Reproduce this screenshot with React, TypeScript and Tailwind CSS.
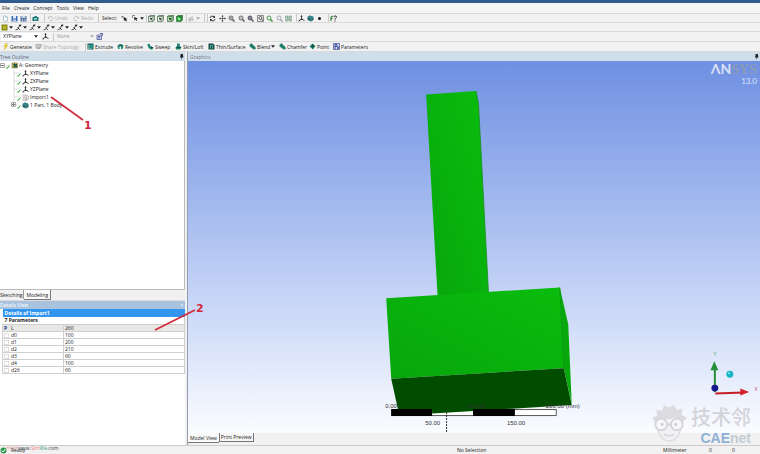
import React from "react";

type IconProps = { name: string };

function Icon({ name }: IconProps) {
  const s = { fill: "none", stroke: "#333", strokeWidth: 1.4 };
  let art: React.ReactNode = null;
  switch (name) {
    case "new":
      art = <><path d="M3 2h5l3 3v7H3z" fill="#fff" stroke="#6d9fae" /><path d="M8 2v3h3" fill="none" stroke="#6d9fae" /></>;
      break;
    case "save":
      art = <><path d="M1 2h12v11H1z" fill="#3e6fb8" /><path d="M4 2h6v5H4z" fill="#dfe9f7" /><path d="M4 9h6v4H4z" fill="#c2d2ea" /></>;
      break;
    case "saveas":
      art = <><path d="M1 2h12v11H1z" fill="#56719d" /><path d="M3 2h8v4H3z" fill="#c9d6ea" /><path d="M4 8h2v5H4zM9 8h2v5H9z" fill="#b0c2dd" /></>;
      break;
    case "camera":
      art = <><path d="M1 4h3l2-2h3l1 2h3v8H1z" fill="#12766e" /><circle cx="7" cy="8" r="2.6" fill="#d8f2ef" /><circle cx="7" cy="8" r="1.2" fill="#12766e" /></>;
      break;
    case "undo":
      art = <path d="M4 3l-2 3 4 1M3 5c3-4 9-2 9 2 0 3-3 5-6 5" fill="none" stroke="#b4b4b4" strokeWidth="1.6" />;
      break;
    case "redo":
      art = <path d="M10 3l2 3-4 1M11 5C8 1 2 3 2 7c0 3 3 5 6 5" fill="none" stroke="#b4b4b4" strokeWidth="1.6" />;
      break;
    case "pick":
      art = <><path d="M5 4l1 8 2-2 2 3 2-1-2-3 3-1z" fill="#222" /><path d="M1 2h4v3H1z" fill="#777" /></>;
      break;
    case "pickbox":
      art = <><path d="M4 4l1 7 2-2 2 3 1-1-1-3 3-1z" fill="#222" /><path d="M1 1h5M1 1v5" stroke="#666" strokeWidth="1.5" /></>;
      break;
    case "point":
    case "edge":
    case "face":
    case "body": {
      const fill = name === "body" ? "#1fae35" : name === "face" ? "#a8dba8" : "#e8efe8";
      art = <><path d="M1 3l3-2h9v9l-3 3H1z" fill={fill} stroke="#356039" strokeWidth="1.3" /><path d="M1 3h9v10M10 3l3-2" fill="none" stroke="#356039" strokeWidth="1.2" /><path d="M4 5l1 5 1-1 2 2 1-1-2-2 2-1z" fill={name === "body" ? "#c9ffd0" : "#222"} /></>;
      break;
    }
    case "extend":
      art = <><path d="M2 6h4v6H2zM8 2v8h4" fill="#ddd" stroke="#aaa" strokeWidth="1.4" /></>;
      break;
    case "rotate":
      art = <><path d="M2 6c0-4 6-5 9-2M12 8c0 4-6 5-9 2" {...s} strokeWidth="2" /><path d="M12 1v5H8zM2 13V8h4z" fill="#222" /></>;
      break;
    case "pan":
      art = <><path d="M7 2v10M2 7h10" {...s} strokeWidth="1.2" /><path d="M7 0l2 3H5zM7 14l2-3H5zM0 7l3-2v4zM14 7l-3-2v4z" fill="#222" /></>;
      break;
    case "zoom":
    case "zoomin":
    case "zoombox":
    case "zoomgreen":
    case "zoomlight": {
      const c = name === "zoomgreen" ? "#268a1e" : name === "zoomlight" ? "#999" : "#444";
      art = <><circle cx="6" cy="6" r="4" fill={name === "zoombox" ? "#88a" : "#eef"} stroke={c} strokeWidth="1.6" /><path d="M9 9l4 4" stroke={c} strokeWidth="2.4" />{name === "zoomin" && <path d="M4 6h4M6 4v4" stroke={c} />}{name === "zoom" && <path d="M4 6h4" stroke={c} />}</>;
      break;
    }
    case "fit":
      art = <><path d="M1 1h12v12H1z" fill="#e6e9e6" stroke="#555" strokeWidth="1.3" /><circle cx="7" cy="6" r="3" {...s} /><path d="M9 8l3 4" {...s} /></>;
      break;
    case "views":
      art = <><path d="M1 2h5v4H1zM8 2h5v4H8zM1 8h5v4H1zM8 8h5v4H8z" fill="#bcd8c5" stroke="#668b75" /><path d="M4 4l6 6" stroke="#477a57" /></>;
      break;
    case "axis":
      art = <><path d="M7 1v7L2 12M7 8l6 3" {...s} strokeWidth="1.8" /><path d="M7 0l2 4H5zM1 13l1-4 2 3z" fill="#333" /><circle cx="7" cy="8" r="1.7" fill="#222" /></>;
      break;
    case "cube":
      art = <><path d="M1 4l5-3 7 3v6l-5 3-7-3z" fill="#1e666c" /><path d="M1 4l7 2 5-2M8 6v7" fill="none" stroke="#81bdbd" /><path d="M6 1l7 3-5 2-7-2z" fill="#2e888a" /></>;
      break;
    case "dot":
      art = <circle cx="7" cy="7" r="3" fill="#111" />;
      break;
    case "help":
      art = <><path d="M2 12V4l4-2M2 7h3" stroke="#267a2e" strokeWidth="2.2" fill="none" /><path d="M8 4c0-3 5-3 5 0 0 2-3 2-3 5M10 11v2" stroke="#222" strokeWidth="2" fill="none" /></>;
      break;
    case "swatch":
      art = <><path d="M1 1h12v12H1z" fill="#8d8f15" /><path d="M4 4h6v6H4z" fill="#b9b62a" /></>;
      break;
    case "curve":
      art = <><path d="M1 12l5-2 3-7 4-1M5 7l5 5" {...s} strokeWidth="1.6" /><circle cx="10" cy="3" r="1.8" fill="#222" /></>;
      break;
    case "sketch":
      art = <><path d="M2 4h9v9H2z" fill="#dbe1ff" stroke="#313b82" strokeWidth="1.3" /><path d="M4 7h5M4 10h4M8 1h5v4" fill="none" stroke="#313b82" strokeWidth="1.6" /></>;
      break;
    case "bolt":
      art = <path d="M9 0L3 7h4l-3 7 8-9H8l3-5z" fill="#f4d822" stroke="#b89b16" strokeWidth=".6" />;
      break;
    case "share":
      art = <><path d="M1 2h12v5l-3 5H4L1 8z" fill="#aaa" /><path d="M4 3v6M8 3v6M2 6h10" stroke="#eee" /></>;
      break;
    case "extrude":
      art = <><path d="M1 1h12v12H1z" fill="#154d5f" /><path d="M4 3h8v6l-3 3H4z" fill="#27947b" /><path d="M2 12h8M3 3v9" stroke="#d1f2ef" /></>;
      break;
    case "revolve":
      art = <><path d="M1 6c2-5 11-5 12 0l-2 6H8V7H5v5H2z" fill="#21856f" /><path d="M3 6c2-3 7-3 8 0" fill="none" stroke="#114e50" strokeWidth="1.6" /></>;
      break;
    case "sweep":
      art = <><path d="M1 2h5v4l7 3-2 4C5 13 1 9 1 2z" fill="#21856f" /><path d="M6 6l3 5 4-2" fill="#114e50" /></>;
      break;
    case "skin":
      art = <><path d="M4 1h5l1 5 3 3-3 4H2L1 9l3-3z" fill="#21856f" /><path d="M3 9h8" stroke="#134b51" strokeWidth="2" /></>;
      break;
    case "thin":
      art = <><path d="M1 1h9l3 3v9H1z" fill="#164e4b" /><path d="M4 4h6v7H4z" fill="#4aa18d" /><path d="M6 6h2v5H6z" fill="#134b51" /></>;
      break;
    case "blend":
      art = <><path d="M1 3l4-2 8 7v4l-4 1-8-6z" fill="#258b73" /><path d="M5 1v4l8 7" fill="none" stroke="#14524f" strokeWidth="1.5" /></>;
      break;
    case "diamond":
      art = <><path d="M7 1l6 5-5 7-7-6z" fill="#238365" /><path d="M7 3v7M4 6h6" stroke="#0f4637" strokeWidth="1.5" /></>;
      break;
    case "params":
      art = <><path d="M1 1h12v12H1z" fill="#dae3ff" stroke="#3b4b93" strokeWidth="1.4" /><path d="M4 12V3h4v4H4M10 6v6M8 10h4" fill="none" stroke="#24347c" strokeWidth="1.7" /></>;
      break;
    case "geometry":
      art = <><path d="M2 2h11v10H2z" fill="#d9c15a" stroke="#62542c" /><path d="M5 4h7v7H5z" fill="#23624c" /><path d="M7 1v6M4 5h9" stroke="#314a3d" /></>;
      break;
    case "import":
      art = <><path d="M2 2h8v11H2z" fill="#eee9e9" stroke="#a39595" /><path d="M6 4h7v7H6z" fill="#f8f3f3" stroke="#9b8d8d" /><path d="M8 6v4l3-2z" fill="#887" /></>;
      break;
    case "pin":
      art = <path d="M5 2h5v5h1v2H8v4H7V9H4V7h1z" fill="#222" />;
      break;
    case "ok":
      art = <><circle cx="7" cy="7" r="6" fill="#289947" /><path d="M3 7l3 3 5-6" fill="none" stroke="#fff" strokeWidth="2" /></>;
      break;
  }
  return <svg viewBox="0 0 14 14" className="size-[7px] shrink-0" aria-hidden="true">{art}</svg>;
}

const Sep = () => <span className="mx-px h-2 w-px shrink-0 bg-[#c9c9c9]" />;
const Caret = ({ dim = false }: { dim?: boolean }) => (
  <svg viewBox="0 0 6 4" className="h-[3px] w-1 shrink-0" aria-hidden="true"><path d="M0 0h6L3 4z" fill={dim ? "#aaa" : "#222"} /></svg>
);

function Tool({ icon, label, width = "w-[9px]", caret, dim }: { icon?: string; label?: string; width?: string; caret?: boolean; dim?: boolean }) {
  return (
    <button aria-label={label ?? icon} className={`flex h-full shrink-0 items-center gap-px whitespace-nowrap ${width} ${dim ? "text-[#aaa]" : ""}`}>
      {icon && <Icon name={icon} />}
      {label && <span>{label}</span>}
      {caret && <Caret dim={dim} />}
    </button>
  );
}

const features: [string, string, string][] = [
  ["extrude", "Extrude", "w-[30px]"],
  ["revolve", "Revolve", "w-[30px]"],
  ["sweep", "Sweep", "w-[28px]"],
  ["skin", "Skin/Loft", "w-[33px]"],
  ["thin", "Thin/Surface", "w-[41px]"],
  ["blend", "Blend", "w-[30px]"],
  ["blend", "Chamfer", "w-[30px]"],
  ["diamond", "Point", "w-[24px]"],
  ["params", "Parameters", "w-[40px]"],
];

const tree: [string, string][] = [
  ["axis", "XYPlane"],
  ["axis", "ZXPlane"],
  ["axis", "YZPlane"],
  ["import", "Import1"],
  ["cube", "1 Part, 1 Body"],
];

const params: [string, string][] = [
  ["L", "260"], ["d0", "100"], ["d1", "200"], ["d2", "210"], ["d3", "60"], ["d4", "100"], ["d26", "60"],
];

const Check = () => (
  <svg viewBox="0 0 8 8" className="size-1 shrink-0 self-end" aria-hidden="true"><path d="M0 5l2 2 5-6" fill="none" stroke="#159526" strokeWidth="2" /></svg>
);

function Toolbars() {
  const row = "flex shrink-0 items-center border-b border-[#dadada] bg-[#f2f2f2]";
  return (
    <header className="shrink-0">
      <div className="h-[3px] bg-[#305d8e]" />
      <nav className="flex h-[10px] items-center gap-1 bg-[#f5f5f5] pl-0.5">
        {["File", "Create", "Concept", "Tools", "View", "Help"].map((m) => <button key={m}>{m}</button>)}
      </nav>
      <div className={`${row} h-[10px] border-t pl-0.5`}>
        <Tool icon="new" /><Tool icon="save" /><Tool icon="saveas" />
        <Sep /><Tool icon="camera" width="w-[11px]" /><Sep />
        <span className="ml-px flex"><Tool icon="undo" label="Undo" width="w-[26px]" dim /><Tool icon="redo" label="Redo" width="w-[24px]" dim /></span>
        <Sep /><span className="ml-0.5"><Tool label="Select:" width="w-[19px]" /></span><Tool icon="pick" width="w-[11px]" /><Tool icon="pickbox" width="w-[13px]" caret />
        <Sep /><Tool icon="point" /><Tool icon="edge" width="w-[10px]" /><Tool icon="face" /><Tool icon="body" />
        <Sep /><Tool icon="extend" width="w-[15px]" caret dim /><Sep /><Sep />
        <Tool icon="rotate" width="w-[10px]" /><Tool icon="pan" /><Tool icon="zoomin" width="w-[10px]" /><Tool icon="zoom" /><Tool icon="zoombox" width="w-[10px]" /><Tool icon="fit" /><Tool icon="zoomgreen" width="w-[10px]" /><Tool icon="zoomlight" /><Tool icon="views" width="w-[10px]" />
        <Sep /><Tool icon="axis" /><Tool icon="cube" /><Tool icon="dot" width="w-[11px]" /><Sep /><Tool icon="help" />
      </div>
      <div className={`${row} h-[9px] pl-px`}>
        <Tool icon="swatch" width="w-[14px]" caret />
        {[1, 2, 3, 4, 5].map((n) => <Tool key={n} icon="curve" width="w-[14px]" caret />)}
      </div>
      <div className={`${row} h-[10px] pl-px`}>
        <label className="flex h-2 w-[39px] items-center bg-white">
          <select aria-label="Plane" className="w-[33px] appearance-none pl-0.5 leading-none outline-none"><option>XYPlane</option></select>
          <Caret />
        </label>
        <span className="ml-0.5"><Tool icon="axis" width="w-[10px]" /></span>
        <Sep />
        <label className="flex h-2 w-[39px] items-center text-[#999]">
          <select aria-label="Sketch" className="w-9 appearance-none pl-0.5 leading-none outline-none"><option>None</option></select>
          <Caret dim />
        </label>
        <span className="ml-0.5"><Tool icon="sketch" /></span>
      </div>
      <div className={`${row} h-[10px] pl-0.5`}>
        <Tool icon="bolt" label="Generate" width="w-[33px]" />
        <Tool icon="share" label="Share Topology" width="w-[49px]" dim />
        <Sep />
        {features.map(([icon, label, width]) => <Tool key={label} icon={icon} label={label} width={width} caret={label === "Blend"} />)}
      </div>
    </header>
  );
}

function TreePanel() {
  return (
    <section className="flex min-h-0 flex-1 flex-col">
      <h2 className="flex h-[9px] shrink-0 items-center justify-between bg-[#cfdeeb] text-[#667]">
        Tree Outline<Icon name="pin" />
      </h2>
      <ul className="relative min-h-0 flex-1 border-r border-[#bbb] bg-white">
        <svg className="absolute left-0 top-0 h-[50px] w-6" aria-hidden="true">
          <path d="M3 5h5M14 9v35M14 12h5M14 20h5M14 28h5M14 36h5M14 44h5" fill="none" stroke="#ddd" />
          <path d="M.5 2.500h4v4h-4zM11.500 41.500h4v4h-4z" fill="#fff" stroke="#aaa" />
          <path d="M1 4.500h3M12 43.500h3M13.500 42v3" stroke="#777" />
        </svg>
        <li className="flex h-2 items-center gap-px pl-[6px]"><Check /><Icon name="geometry" />A: Geometry</li>
        {tree.map(([icon, label]) => (
          <li key={label} className="flex h-2 items-center gap-px pl-[17px]"><Check /><Icon name={icon} />{label}</li>
        ))}
        <svg className="absolute left-[50px] top-[34px] h-[38px] w-[46px]" aria-hidden="true">
          <path d="M1 2l32 23" stroke="#d2283c" strokeWidth="1.6" />
        </svg>
        <li className="absolute left-[84px] top-[58px] list-none font-['DejaVu_Sans',sans-serif] text-[11px] font-bold leading-[13px] text-[#d2283c]">1</li>
      </ul>
      <div className="flex h-[11px] shrink-0 items-start border-t border-[#bbb] bg-[#f1f1f1]">
        <button className="h-[9px] border-r border-[#999] pr-px">Sketching</button>
        <button className="h-[10px] border-b border-r border-[#777] bg-[#fafafa] px-0.5">Modeling</button>
      </div>
    </section>
  );
}

function DetailsPanel() {
  return (
    <section className="relative flex h-[145px] shrink-0 flex-col border-t border-[#ddd] bg-white">
      <h2 className="flex h-2 shrink-0 items-center justify-between bg-[#a9c3de] pr-0.5 text-white">Details View<span>×</span></h2>
      <table className="ml-0.5 table-fixed border-collapse">
        <colgroup><col className="w-[61px]" /><col /></colgroup>
        <tbody>
          <tr><th colSpan={2} className="h-2 bg-[#3296ef] p-0 pl-0.5 text-left font-bold leading-[8px] text-white">Details of Import1</th></tr>
          <tr><th colSpan={2} className="h-[7px] border-r border-[#ccc] p-0 pl-0.5 text-left font-bold leading-[7px]">7 Parameters</th></tr>
          {params.map(([name, value], i) => (
            <tr key={name} className={i === 0 ? "bg-[#e7e7e3]" : ""}>
              <td className="h-[7px] border border-[#cfcfcf] p-0 leading-[6px]">
                <label className="flex h-[6px] items-center gap-0.5 pl-px">
                  {i === 0 ? <b className="w-[5px] text-[#203a94]">P</b> : <input type="checkbox" className="size-[5px] appearance-none border border-[#ddd] bg-white" />}
                  {name}
                </label>
              </td>
              <td className="h-[7px] border border-[#cfcfcf] p-0 leading-[6px]">
                <input aria-label={`${name} value`} defaultValue={value} className="block h-[6px] w-full bg-transparent pl-px outline-none" />
              </td>
            </tr>
          ))}
        </tbody>
      </table>
      <svg className="absolute left-[154px] top-[6px] z-20 h-[26px] w-[44px]" aria-hidden="true"><path d="M1 23L41 3" stroke="#d2283c" strokeWidth="1.6" /></svg>
      <span className="absolute left-[196px] top-px z-20 font-['DejaVu_Sans',sans-serif] text-[11px] font-bold leading-[13px] text-[#d2283c]">2</span>
    </section>
  );
}

function Model() {
  return (
    <svg viewBox="188 60 572 373" className="block h-full w-full" role="img" aria-label="Green solid model with a scale bar and axes">
      <defs>
        <linearGradient id="front" x1="0" y1="1" x2="1" y2="0"><stop stopColor="#07a60b" /><stop offset="1" stopColor="#0abd0d" /></linearGradient>
      </defs>
      <path d="M426 93.500l50-3.500 2.500 13 10 190-51 3z" fill="url(#front)" />
      <path d="M476 90l2.500 13 10 189" fill="none" stroke="#158b1a" strokeWidth=".8" />
      <path d="M560 287l8.500 37L572 404l-8-36z" fill="#08a80c" />
      <path d="M386 298l174-11 4 81-173 10.500z" fill="url(#front)" />
      <path d="M391 378.500L564 368l8 37-139 8.500-35-3z" fill="#004d00" />
      <path d="M560 287l4 81" stroke="#079a0b" />
      <g fontFamily="Liberation Sans, sans-serif" fontSize="6" fill="#333">
        <text x="385" y="408">0.00</text><text x="467" y="408">100.00</text><text x="546" y="408">200.00 (mm)</text>
        <text x="425" y="425">50.00</text><text x="507" y="425">150.00</text>
      </g>
      <path d="M391.500 409.500h165v6h-165z" fill="#fff" stroke="#555" />
      <path d="M432 409h42v2l-42 2.500z" fill="#004d00" />
      <path d="M391 409h41v7h-41zM473 409h42v7h-42z" fill="#000" />
      <path d="M446.500 412v21" stroke="#333" strokeDasharray="2 1" />
      <path d="M715.500 392V368" stroke="#278a34" strokeWidth="2" />
      <path d="M715 361l4 9h-8z" fill="#23913a" />
      <path d="M716 393.500l28-1" stroke="#c91d26" strokeWidth="2" />
      <path d="M750 392l-9-3.500v7z" fill="#d51f28" />
      <circle cx="715.500" cy="388" r="3.500" fill="#18188d" />
      <circle cx="730.500" cy="374" r="3.500" fill="#16b5c5" />
      <circle cx="729.500" cy="373" r="1" fill="#8eecf2" />
      <g fontFamily="Liberation Sans, sans-serif" fontSize="5">
        <text x="714" y="356" fill="#5b9a70">Y</text><text x="755" y="391" fill="#bd5777">X</text>
      </g>
    </svg>
  );
}

function Watermark() {
  return (
    <div className="pointer-events-none absolute bottom-0 right-[9px] flex h-[43px] items-start">
      <svg viewBox="0 0 36 44" className="h-[43px] w-9" aria-hidden="true">
        <path d="M3 20l-2-4 5-2-1-6 6 1 2-6 5 3 5-3 3 5 6-1-1 6 5 3-4 5c-3-4-7-6-9-5-7 4-13-1-18 5z" fill="#dcdce0" />
        <path d="M6 20c-1 12 5 20 12 20s13-8 12-20" fill="#f1f1f4" stroke="#dcdce0" strokeWidth="1.500" />
        <g fill="#f7f7f9" stroke="#d6d6da" strokeWidth="2"><circle cx="10" cy="23" r="6" /><circle cx="26" cy="23" r="6" /><path d="M16 23h4" /></g>
        <circle cx="11" cy="23" r="1.500" fill="#ccc" /><circle cx="25" cy="23" r="1.500" fill="#ccc" /><path d="M13 33q5 3 10 0" fill="none" stroke="#d6d6da" strokeWidth="1.500" />
      </svg>
      <div className="ml-1 flex flex-col items-end">
        <span className="font-['Noto_Sans_CJK_SC',sans-serif] text-[20px] font-medium leading-[29px] text-[#d3d3d9]">技术邻</span>
        <span className="font-['Liberation_Sans',sans-serif] text-[14px] font-bold leading-[14px] text-[#c3cdd4]"><span className="text-[#8fb0d6]">CAE</span>net</span>
      </div>
    </div>
  );
}

export default function App() {
  return (
    <div className="flex h-screen flex-col overflow-hidden bg-[#f1f1f1] font-['Open_Sans',sans-serif] text-[5px] leading-[8px] text-[#222]">
      <Toolbars />
      <main className="flex min-h-0 flex-1">
        <aside className="flex w-[185px] shrink-0 flex-col"><TreePanel /><DetailsPanel /></aside>
        <section className="relative ml-0.5 flex min-w-0 flex-1 flex-col border-l border-[#929dad]">
          <h2 className="flex h-[9px] shrink-0 items-center justify-between bg-[#cfdeeb] pl-0.5 text-[#778]">Graphics<Icon name="pin" /></h2>
          <div className="relative min-h-0 flex-1 bg-linear-to-b from-[#6f8fe1] to-[#fbfcff]">
            <Model />
            <div className="absolute right-[3px] top-0 text-right font-['Lato',sans-serif] text-white">
              <p className="text-[14px] font-bold leading-[15px] text-[#d8e0f5]">ΛN<span className="font-['Liberation_Serif',serif] text-[#8b9bb8]">SYS</span></p>
              <p className="text-[8px] leading-[8px] text-[#dbe4fb]">13.0</p>
            </div>
          </div>
          <div className="flex h-3 shrink-0 items-start bg-[#f1f1f1]">
            <button className="h-[10px] border-b border-[#777] bg-[#fafafa] px-0.5">Model View</button>
            <button className="h-[9px] border border-t-0 border-[#777] bg-[#f5f5f5] px-px">Print Preview</button>
          </div>
          <Watermark />
        </section>
      </main>
      <footer className="relative flex h-[9px] shrink-0 items-center border-t border-[#ccc] bg-[#f1f1f1]">
        <span className="flex w-3/5 items-center gap-1"><Icon name="ok" />Ready</span>
        <span className="absolute left-[6px] top-[-1px] flex text-[#d77]"><span className="w-3 text-[3px] leading-[6px]">仿真在线</span><span className="leading-[6px]"><span className="text-[#444]">www.</span><span className="text-[#e77]">Sim</span><span className="text-[#3a9a80]">We</span><span className="text-[#444]">.com</span></span></span>
        <span className="flex flex-1 pl-px">No Selection</span>
        <span className="w-[46px]">Millimeter</span><span className="w-[23px]">0</span><span className="w-7">0</span>
      </footer>
    </div>
  );
}
